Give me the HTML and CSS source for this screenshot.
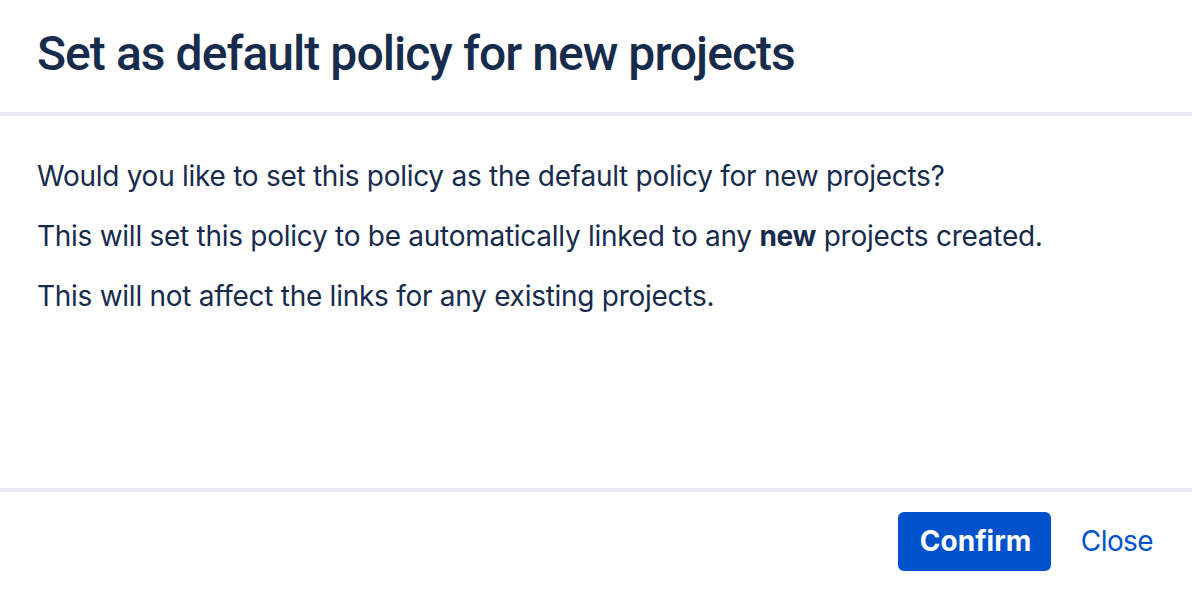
FILE: index.html
```html
<!DOCTYPE html>
<html lang="en">
<head>
<meta charset="utf-8">
<title>Set as default policy</title>
<link rel="stylesheet" href="styles.css">
</head>
<body>
<div class="modal">
  <header class="modal-header">
    <h1 class="modal-title">Set as default policy for new projects</h1>
  </header>
  <div class="modal-body">
    <p>Would you like to set this policy as the default policy for new projects?</p>
    <p>This will set this policy to be automatically linked to any <strong>new</strong> projects created.</p>
    <p>This will not affect the links for any existing projects.</p>
  </div>
  <footer class="modal-footer">
    <button class="btn btn-primary">Confirm</button>
    <button class="btn btn-link">Close</button>
  </footer>
</div>
</body>
</html>
```

FILE: styles.css
```css
html, body {
  margin: 0;
  padding: 0;
  background: #ffffff;
}
body {
  font-family: Inter, "Noto Sans", sans-serif;
  color: #172b4d;
}
.modal {
  width: 1192px;
  height: 590px;
  display: flex;
  flex-direction: column;
}
.modal-header {
  height: 116px;
  box-sizing: border-box;
  padding: 26px 37px 0;
  border-bottom: 4px solid #ebecf0;
}
.modal-title {
  margin: 0;
  font-family: Roboto, Inter, sans-serif;
  font-size: 48px;
  font-weight: 500;
  line-height: 56px;
  letter-spacing: -0.95px;
}
.modal-body {
  flex: 1;
  padding: 40px 37px 0;
}
.modal-body p {
  margin: 0 0 20px;
  font-size: 28px;
  line-height: 40px;
  letter-spacing: -0.27px;
}
.modal-body strong {
  font-weight: 700;
}
.modal-footer {
  border-top: 4px solid #ebecf0;
  height: 102px;
  box-sizing: border-box;
  display: flex;
  justify-content: flex-end;
  align-items: center;
  padding: 0 17px 0 0;
  gap: 8px;
}
.btn {
  font-family: inherit;
  font-size: 28px;
  border: 0;
  border-radius: 6px;
  height: 59px;
  padding: 0 22px;
  cursor: pointer;
}
.btn-primary {
  background: #0052cc;
  color: #ffffff;
  font-weight: 700;
  width: 153px;
}
.btn-link {
  background: transparent;
  color: #0052cc;
  font-weight: 400;
  letter-spacing: -0.6px;
}
```
